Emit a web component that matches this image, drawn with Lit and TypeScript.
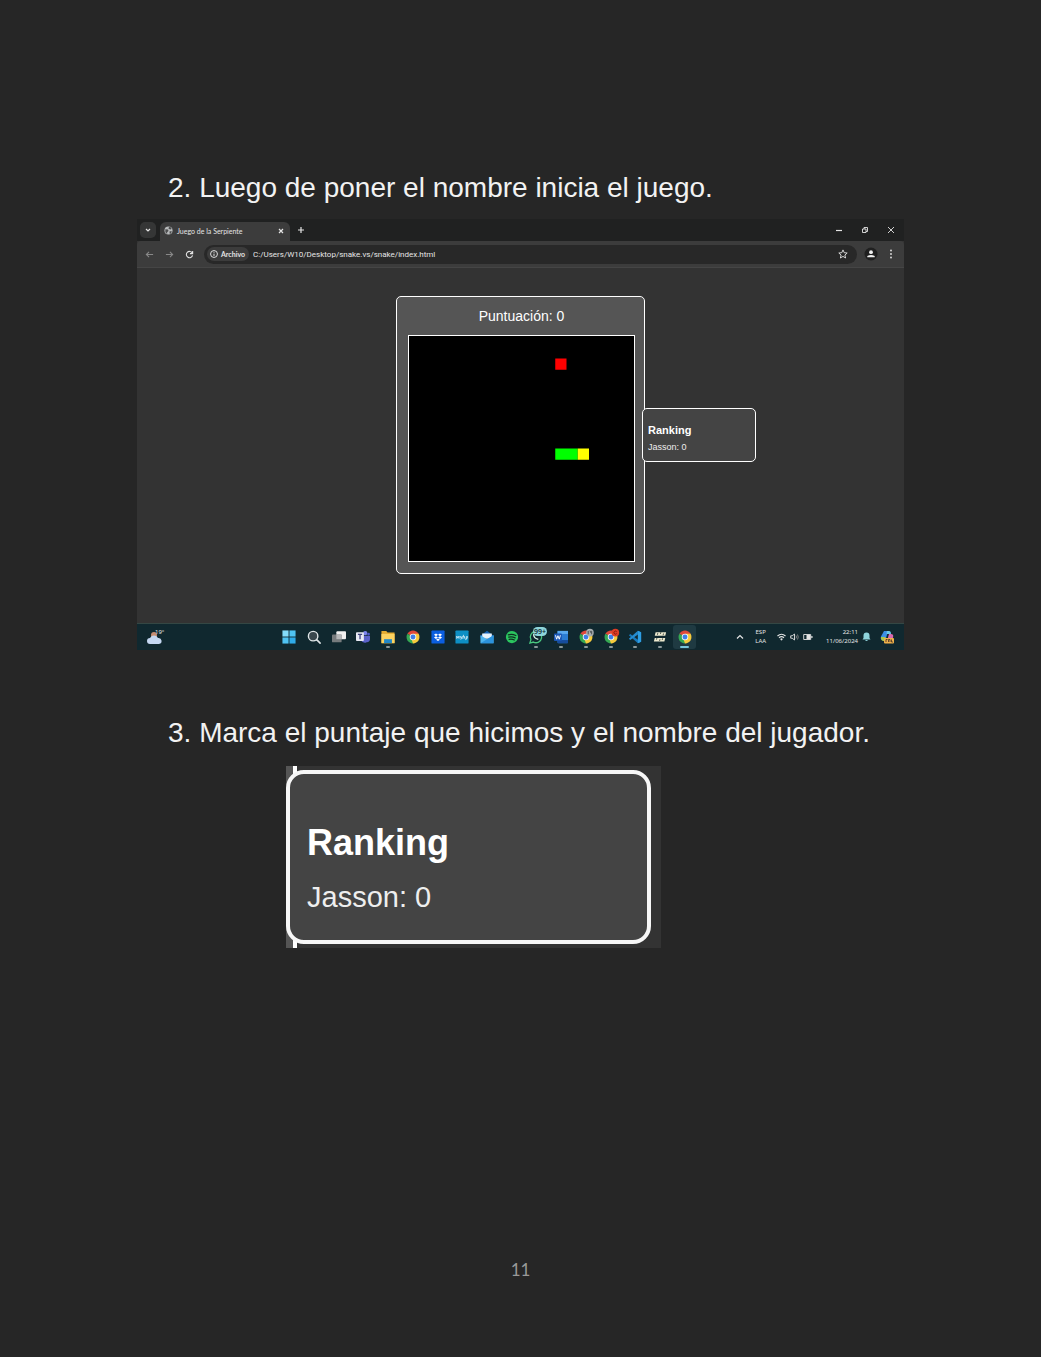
import { LitElement, html, css, svg } from "lit";
import { customElement, property } from "lit/decorators.js";

const chrome = svg`
  <path d="M8 8 L1.6 4.3 A7.4 7.4 0 0 1 14.4 4.3 Z" fill="#e0483a"/>
  <path d="M8 8 L14.4 4.3 A7.4 7.4 0 0 1 8 15.4 Z" fill="#f7cb3c"/>
  <path d="M8 8 L8 15.4 A7.4 7.4 0 0 1 1.6 4.3 Z" fill="#35a853"/>
  <path d="M8 4.3 H14.4 L11.4 8 Z" fill="#f7cb3c"/>
  <path d="M11.3 9.8 L8 15.4 L6.4 11 Z" fill="#f7cb3c"/>
  <circle cx="8" cy="8" r="3.7" fill="#f2f4f5"/>
  <circle cx="8" cy="8" r="2.8" fill="#3f7fe8"/>`;

type App = { name: string; art: unknown; state?: "running" | "active" };

const apps: App[] = [
  { name: "Inicio", art: svg`<g fill="#4fc3f2"><path d="M.5 .5h7v7h-7z" fill="#84dcfa"/><path d="M8.5 .5h7v7h-7z"/><path d="M.5 8.5h7v7h-7z"/><path d="M8.5 8.5h7v7h-7z" fill="#2fabe8"/></g>` },
  { name: "Buscar", art: svg`<circle cx="7" cy="7" r="5.4" fill="#39474d" stroke="#dfe5e7" stroke-width="1.6"/><path d="M11 11l4 4" stroke="#dfe5e7" stroke-width="1.8" stroke-linecap="round"/>` },
  { name: "Vista de tareas", art: svg`<rect x="5" y="1.5" width="11" height="9" rx="1" fill="#f1f1f1"/><rect x="0" y="5" width="11" height="9" rx="1" fill="#777b7d"/><path d="M5 5h6v5.500h-6z" fill="#b5b7b8"/>` },
  { name: "Teams", art: svg`<circle cx="10.500" cy="3.500" r="2.500" fill="#7b83eb"/><circle cx="14.300" cy="4.600" r="1.600" fill="#5059c9"/><path d="M6 6.500h10v4a3.500 3.500 0 0 1-4 3.500a4 4 0 0 1-6-3z" fill="#5b62c9"/><rect x="0" y="2.500" width="9" height="10" rx="1" fill="#e8eaf4"/><path d="M2.200 5h4.800M4.600 5v5.500" stroke="#3e4380" stroke-width="1.500"/>` },
  { name: "Explorador", state: "running", art: svg`<path d="M.5 1h5.500l1.500 1.800h8v12.200H.5z" fill="#e5ad32"/><path d="M.5 4.500h15V15H.5z" fill="#fbd361"/><path d="M3.500 15V10.500h9V15z" fill="#2188c9"/>` },
  { name: "Chrome", art: chrome },
  { name: "Dropbox", art: svg`<rect x=".5" y=".5" width="15" height="15" rx="1" fill="#0b5fe0"/><path d="M5.700 4l2.300 1.500-2.300 1.500-2.300-1.500zM10.300 4l2.300 1.500-2.300 1.500L8 5.500zM5.700 7.200L8 8.700l-2.300 1.500-2.300-1.500zM10.300 7.200l2.300 1.500-2.300 1.500L8 8.700zM8 9.700l2.200 1.400L8 12.500l-2.200-1.400z" fill="#fff"/>` },
  { name: "MyHP", art: svg`<rect x=".5" y=".5" width="15" height="15" rx="1" fill="#0d8fc4"/><path d="M2 10V7l1.300 2L4.600 7v3M6 7l1 2.500M8.300 7L6.600 11M9.800 5.500L8.800 10M9.500 7.500h1.500L10.500 10M12.200 11.500l.9-4h1.200L13.600 10h-.9" fill="none" stroke="#e5f5fb" stroke-width=".9"/>` },
  { name: "Correo", art: svg`<path d="M.5 6.500L8 .8l7.500 5.700v2H.5z" fill="#1763b5"/><path d="M2.500 4h11v6h-11z" fill="#e6f2fb"/><path d="M.5 6L8 10.500 15.500 6v9H.5z" fill="#4db5ef"/><path d="M.5 15L9 9.900 15.500 6v9z" fill="#2b92dc"/>` },
  { name: "Spotify", art: svg`<circle cx="8" cy="8" r="7" fill="#2bc55f"/><path d="M3.800 5.500q4.500-1.200 8.600.8M4.200 8.200q3.900-1 7.400.8M4.700 10.700q3.200-.7 6 .7" fill="none" stroke="#0e2f20" stroke-width="1.400" stroke-linecap="round"/>` },
  { name: "WhatsApp", state: "running", art: svg`<path d="M1 15l1.200-4A6.500 6.500 0 1 1 5 13.800z" fill="none" stroke="#49c77f" stroke-width="1.500"/><path d="M5.300 5.500c.2 2.500 2 4.400 4.700 5" fill="none" stroke="#d6f2e2" stroke-width="1.600" stroke-linecap="round"/>` },
  { name: "Word", state: "running", art: svg`<rect x="4" y="1" width="12" height="14" rx="1" fill="#2b7cd3"/><path d="M4 1h12v3.500H4z" fill="#59a8ee"/><path d="M4 11.500h12V15H4z" fill="#164c9c"/><rect x="0" y="4" width="9" height="8.500" rx="1" fill="#1b57b4"/><path d="M1.700 6l1.300 4.500L4.500 6.500 6 10.500 7.300 6" fill="none" stroke="#fff" stroke-width="1.100"/>` },
  { name: "Chrome, perfil 1", state: "running", art: svg`${chrome}<circle cx="12.500" cy="3" r="4.300" fill="#a9aeb0"/><path d="M10.500 1v4M12.500 .8l1.400 2.700M14.500 1v4" stroke="#3e4648"/>` },
  { name: "Chrome, perfil 2", state: "running", art: svg`${chrome}<circle cx="13" cy="3" r="4.300" fill="#dc3d25"/><path d="M14.500 2a1.700 1.700 0 1 0 0 2" fill="none" stroke="#7d160b"/>` },
  { name: "Visual Studio Code", state: "running", art: svg`<path d="M11.300 .8L15 2.500v11l-3.700 1.700L1 6l1.600-1.300L11.300 11z" fill="#1779bd"/><path d="M11.300 .8L15 2.500v11l-3.700 1.700z" fill="#2e9ee2"/><path d="M1 10l10.300-9.200V5L2.600 11.300z" fill="#258cd0"/>` },
  { name: "Juego", state: "running", art: svg`<path d="M3 2.500h12l-1 4H2z" fill="#ece9cf"/><path d="M2 9h12l-1 4H1z" fill="#ece9cf"/><path d="M5.500 3.500l-.5 2M9 2.500l-.5 2M12 4l-.5 2M4.500 9l-.5 2M8 10.500l-.5 2M11 9.500l-.5 2" stroke="#252f2d" stroke-width=".9"/>` },
  { name: "Chrome, Juego de la Serpiente", state: "active", art: chrome },
];

@customElement("ranking-card")
export class RankingCard extends LitElement {
  @property() player = "";
  @property({ type: Number }) score = 0;
  @property({ type: Boolean, reflect: true }) large = false;

  static styles = css`
    :host {
      display: flex;
      flex-direction: column;
      justify-content: center;
      box-sizing: border-box;
      gap: 5px;
      padding: 9px 5px 2px;
      border: 1px solid #fff;
      border-radius: 5px;
      background: #444;
      color: #fff;
      font-family: "Liberation Sans", Arial, sans-serif;
    }
    .title {
      margin: 0;
      font-size: 11px;
      line-height: 13px;
      font-weight: 700;
    }
    .entry {
      margin: 0;
      font-size: 9px;
      line-height: 11px;
      color: #eee;
    }
    :host([large]) {
      gap: 16px;
      padding: 48px 17px 26px;
      border-width: 4px;
      border-radius: 18px;
      border-color: #f7f7f7;
    }
    :host([large]) .title {
      font-size: 36px;
      line-height: 42px;
    }
    :host([large]) .entry {
      font-size: 29px;
      line-height: 34px;
    }
  `;

  render() {
    return html`<h3 class="title">Ranking</h3>
      <p class="entry">${this.player}: ${this.score}</p>`;
  }
}

@customElement("snake-browser")
export class SnakeBrowser extends LitElement {
  static styles = css`
    :host {
      display: block;
      background: #333;
      color: #e4e4e4;
      font-family: Lato, "Open Sans", sans-serif;
      font-size: 8px;
    }
    button {
      display: flex;
      align-items: center;
      justify-content: center;
      border: 0;
      padding: 0;
      background: none;
      color: inherit;
      font: inherit;
    }
    svg {
      display: block;
      flex: none;
    }
    .line {
      fill: none;
      stroke: currentColor;
      stroke-width: 1.2;
    }
    .thin {
      stroke-width: 0.9;
    }
    .tabs {
      display: flex;
      align-items: stretch;
      height: 22px;
      padding: 0 5px 0 3px;
      background: #202121;
    }
    .menu {
      width: 16px;
      height: 16px;
      margin: 3px 4px 0 0;
      border-radius: 5px;
      background: #353636;
    }
    .tab {
      display: flex;
      align-items: center;
      gap: 4px;
      width: 130px;
      box-sizing: border-box;
      margin-top: 3px;
      padding: 0 4px 2px;
      border-radius: 6px 6px 0 0;
      background: #3c3c3c;
      font-size: 7px;
    }
    .tab-name {
      flex: 1;
      white-space: nowrap;
    }
    .tab-close {
      width: 10px;
      height: 12px;
    }
    .new {
      width: 18px;
      margin: 0 auto 0 2px;
    }
    .win {
      width: 16px;
      margin-left: 10px;
    }
    .toolbar {
      display: flex;
      align-items: center;
      height: 26px;
      padding: 0 1px 0 4px;
      border-bottom: 1px solid #454545;
      border-radius: 4px 4px 0 0;
      background: #3c3c3c;
    }
    .nav {
      width: 16px;
      height: 16px;
      margin-right: 4px;
    }
    .dim {
      color: #888;
    }
    .address {
      display: flex;
      align-items: center;
      gap: 4px;
      flex: 1;
      height: 19px;
      margin: 0 6px 0 3px;
      padding: 0 6px 0 3px;
      border-radius: 10px;
      background: #282828;
    }
    .scheme {
      gap: 3px;
      height: 14px;
      padding: 0 4px 0 3px;
      border-radius: 7px;
      background: #3c3c3c;
      font-size: 7px;
      font-weight: 700;
    }
    .url {
      flex: 1;
      min-width: 0;
      border: 0;
      padding: 0;
      background: none;
      color: #e6e6e6;
      font: 8px Roboto, sans-serif;
    }
    .star {
      width: 17px;
      height: 17px;
    }
    .page {
      display: flex;
      justify-content: center;
      padding: 28px 0 49px;
    }
    .game {
      position: relative;
      box-sizing: border-box;
      width: 249px;
      padding: 11px 9px 11px 11px;
      border: 1px solid #fff;
      border-radius: 5px;
      background: #555;
    }
    .score {
      margin: 0 0 11px;
      font: 14px/16px "Liberation Sans", Arial, sans-serif;
      color: #fff;
      text-align: center;
    }
    .board {
      box-sizing: border-box;
      width: 100%;
      border: 1px solid #fff;
      background: #000;
    }
    .ranking {
      position: absolute;
      left: calc(100% - 2px);
      top: 111px;
      width: 114px;
      height: 54px;
    }
    .taskbar {
      display: grid;
      grid-template-columns: 1fr 420px 207px;
      align-items: center;
      height: 26px;
      border-top: 1px solid #344744;
      background: #10282f;
      font-family: "Noto Sans", sans-serif;
    }
    .weather {
      position: relative;
      width: 20px;
      margin-left: 9px;
    }
    .temp {
      position: absolute;
      left: 9px;
      top: -1px;
      font-size: 6px;
      line-height: 8px;
    }
    .apps {
      display: grid;
      grid-template-columns: repeat(17, 1fr);
      height: 26px;
    }
    .app {
      position: relative;
    }
    .app.active {
      margin: 1px;
      border-radius: 3px;
      background: #1f3a42;
    }
    .app.running::after,
    .app.active::after {
      content: "";
      position: absolute;
      left: calc(50% - 2px);
      bottom: 2px;
      width: 4px;
      height: 2px;
      border-radius: 1px;
      background: #8c999b;
    }
    .app.active::after {
      left: calc(50% - 5px);
      bottom: 1px;
      width: 9px;
      background: #79c6dc;
    }
    .count {
      position: absolute;
      left: 9px;
      top: 3px;
      padding: 0 1px;
      border-radius: 5px;
      background: #8ed5da;
      color: #10282f;
      font-size: 7px;
      line-height: 9px;
      font-weight: 600;
    }
    .tray {
      display: flex;
      align-items: center;
      justify-content: flex-end;
      gap: 4px;
      padding-right: 10px;
      font-size: 6px;
      line-height: 9px;
    }
    .lang {
      margin: 0 7px;
      text-align: center;
    }
    .clock {
      margin-left: 9px;
      text-align: right;
    }
    .copilot {
      margin-left: 5px;
    }
  `;

  render() {
    return html`
      <div class="tabs">
        <button class="menu" aria-label="Buscar pestañas">
          <svg width="8" height="8" viewBox="0 0 8 8"><path class="line" d="M2 3l2 2 2-2" /></svg>
        </button>
        <div class="tab">
          <svg width="9" height="9" viewBox="0 0 10 10"><circle cx="5" cy="5" r="4.500" fill="#b9bbbc" /><path d="M1.500 3.500l3 .5.5 1.500-1.500 1.500v2L1.500 7zM5.500 1l-.5 2 2 1 1.500-.8L7.500 1.300zM6 6l2.500-.5-.5 2.500-1.500 1z" fill="#4c4d4e" /></svg>
          <span class="tab-name">Juego de la Serpiente</span>
          <button class="tab-close" aria-label="Cerrar pestaña">
            <svg width="8" height="8" viewBox="0 0 8 8"><path class="line" d="M2 2l4 4M6 2l-4 4" /></svg>
          </button>
        </div>
        <button class="new" aria-label="Nueva pestaña">
          <svg width="8" height="8" viewBox="0 0 8 8"><path class="line" d="M4 1v6M1 4h6" /></svg>
        </button>
        <button class="win" aria-label="Minimizar">
          <svg width="8" height="8" viewBox="0 0 8 8"><path class="line" d="M1 4.500h6" /></svg>
        </button>
        <button class="win" aria-label="Restaurar">
          <svg width="8" height="8" viewBox="0 0 8 8"><path class="line thin" d="M1.500 3h3.500v3.500h-3.500zM3 3V1.500h3.500v4H5" /></svg>
        </button>
        <button class="win" aria-label="Cerrar">
          <svg width="8" height="8" viewBox="0 0 8 8"><path class="line thin" d="M1 1l6 6M7 1l-6 6" /></svg>
        </button>
      </div>
      <div class="toolbar">
        <button class="nav dim" aria-label="Atrás">
          <svg width="9" height="9" viewBox="0 0 10 10"><path class="line" d="M9 5H1.500M4.500 2l-3 3 3 3" /></svg>
        </button>
        <button class="nav dim" aria-label="Adelante">
          <svg width="9" height="9" viewBox="0 0 10 10"><path class="line" d="M1 5h7.500M5.500 2l3 3-3 3" /></svg>
        </button>
        <button class="nav" aria-label="Recargar">
          <svg width="9" height="9" viewBox="0 0 10 10"><path class="line" d="M8 3.200A3.500 3.500 0 1 0 8.400 6M8.500 1v3h-3" /></svg>
        </button>
        <div class="address">
          <button class="scheme">
            <svg width="8" height="8" viewBox="0 0 10 10"><circle class="line" cx="5" cy="5" r="4.300" /><path class="line" d="M5 4.500v3M5 2.300v1.200" /></svg>
            Archivo
          </button>
          <input class="url" aria-label="Dirección" value="C:/Users/W10/Desktop/snake.vs/snake/index.html" />
          <button class="star" aria-label="Añadir a marcadores">
            <svg width="10" height="10" viewBox="0 0 10 10"><path class="line thin" d="M5 .9l1.200 2.800 3 .3-2.300 2 .7 3L5 7.400 2.400 9l.7-3L.8 4l3-.3z" /></svg>
          </button>
        </div>
        <button class="nav" aria-label="Perfil">
          <svg width="14" height="14" viewBox="0 0 14 14"><circle cx="7" cy="7" r="6.500" fill="#202020" /><circle cx="7" cy="5.200" r="1.900" fill="#f1f1f1" /><path d="M3.300 10.300V9q3.700-2.200 7.400 0v1.300z" fill="#f1f1f1" /></svg>
        </button>
        <button class="nav" aria-label="Más opciones">
          <svg width="4" height="10" viewBox="0 0 4 10" fill="currentColor"><circle cx="2" cy="1.500" r=".9" /><circle cx="2" cy="5" r=".9" /><circle cx="2" cy="8.500" r=".9" /></svg>
        </button>
      </div>
      <div class="page">
        <div class="game">
          <p class="score">Puntuación: 0</p>
          <svg class="board" viewBox="0 0 20 20">
            <rect x="13" y="2" width="1" height="1" fill="#f00" />
            <rect x="13" y="10" width="2" height="1" fill="#0f0" />
            <rect x="15" y="10" width="1" height="1" fill="#ff0" />
          </svg>
          <ranking-card class="ranking" player="Jasson" score="0"></ranking-card>
        </div>
      </div>
      <div class="taskbar">
        <div class="weather">
          <svg width="18" height="16" viewBox="0 0 18 16"><circle cx="8" cy="6" r="3" fill="#c68d72" /><path d="M4 15a3 3 0 0 1 0-6 4.500 4.500 0 0 1 8 0A3 3 0 0 1 13 15z" fill="#c5d7f1" /></svg>
          <span class="temp">19°</span>
        </div>
        <div class="apps">
          ${apps.map(
            (app) => html`<button class="app ${app.state ?? ""}" aria-label=${app.name}>
              <svg width="14" height="14" viewBox="0 0 16 16" overflow="visible">${app.art}</svg>
              ${app.name === "WhatsApp" ? html`<span class="count">99+</span>` : ""}
            </button>`,
          )}
        </div>
        <div class="tray">
          <svg width="8" height="8" viewBox="0 0 8 8"><path class="line" d="M1 5.500l3-3 3 3" /></svg>
          <span class="lang">ESP<br />LAA</span>
          <svg width="9" height="8" viewBox="0 0 9 8"><path class="line" d="M.5 3q4-3.500 8 0M2 4.700q2.500-2 5 0" /><circle cx="4.500" cy="6.300" r="1.100" fill="currentColor" /></svg>
          <svg width="9" height="8" viewBox="0 0 9 8"><path class="line thin" d="M.7 2.800h1.500L4.500 1v6L2.200 5.200H.7z" /><path class="line thin dim" d="M6 2.500q1 1.500 0 3M7.500 1.500q1.500 2.500 0 5" /></svg>
          <svg width="10" height="8" viewBox="0 0 10 8"><path class="line thin" d="M.7 1.500h7v5h-7z" /><path d="M3.500 2h4v4h-4zM8.300 3h1.200v2H8.300z" fill="currentColor" /></svg>
          <span class="clock">22:11<br />11/06/2024</span>
          <svg width="9" height="10" viewBox="0 0 9 10"><path d="M4.500 .5a3 3 0 0 1 3 3v2.500l1 1.500h-8l1-1.500V3.500a3 3 0 0 1 3-3zM3 8h3q-1.500 2-3 0z" fill="#8ed4dc" /></svg>
          <svg class="copilot" width="14" height="14" viewBox="0 0 14 14"><path d="M4 1h4L5.500 10H3Q0 10 1 6.500z" fill="#3b8ee5" /><path d="M7 1h2q2 0 2 3h-4.500z" fill="#68c7e8" /><path d="M9 4h2q3 0 2 3.500L12 11H7z" fill="#d768b0" /><path d="M1 7h4.500l-1 4H3Q.5 10 1 7z" fill="#a8c74c" /><rect x="4" y="8" width="10" height="5.500" rx="1" fill="#eeb04a" /><path d="M6 12V9.500h1.500M8.500 12V9.500H10V12M11.500 9.500V12H13" fill="none" stroke="#402c22" stroke-width=".8" /></svg>
        </div>
      </div>
    `;
  }
}

@customElement("app-root")
export class AppRoot extends LitElement {
  static styles = css`
    :host {
      display: flex;
      flex-direction: column;
      box-sizing: border-box;
      min-height: 100vh;
      padding: 172px 137px 76px;
      background: #262626;
      color: #f2f2f2;
      font-family: "Liberation Sans", Arial, sans-serif;
    }
    .step {
      margin: 0 0 15px 31px;
      font-size: 28px;
      line-height: 32px;
      font-weight: 400;
    }
    .screen {
      margin-bottom: 67px;
    }
    .detail {
      align-self: flex-start;
      display: flex;
      box-sizing: border-box;
      width: 375px;
      max-width: 100%;
      margin: 2px 0 32px 149px;
      padding: 4px 10px 4px 0;
      background: linear-gradient(90deg, #555 7px, #fff 7px 11px, #333 11px);
    }
    .detail-card {
      flex: 1;
    }
    .number {
      margin-top: auto;
      color: #999;
      font: 17px/22px Lato, sans-serif;
      text-align: center;
    }
  `;

  render() {
    return html`
      <h2 class="step">2. Luego de poner el nombre inicia el juego.</h2>
      <snake-browser class="screen"></snake-browser>
      <h2 class="step">3. Marca el puntaje que hicimos y el nombre del jugador.</h2>
      <div class="detail">
        <ranking-card class="detail-card" large player="Jasson" score="0"></ranking-card>
      </div>
      <footer class="number">11</footer>
    `;
  }
}
